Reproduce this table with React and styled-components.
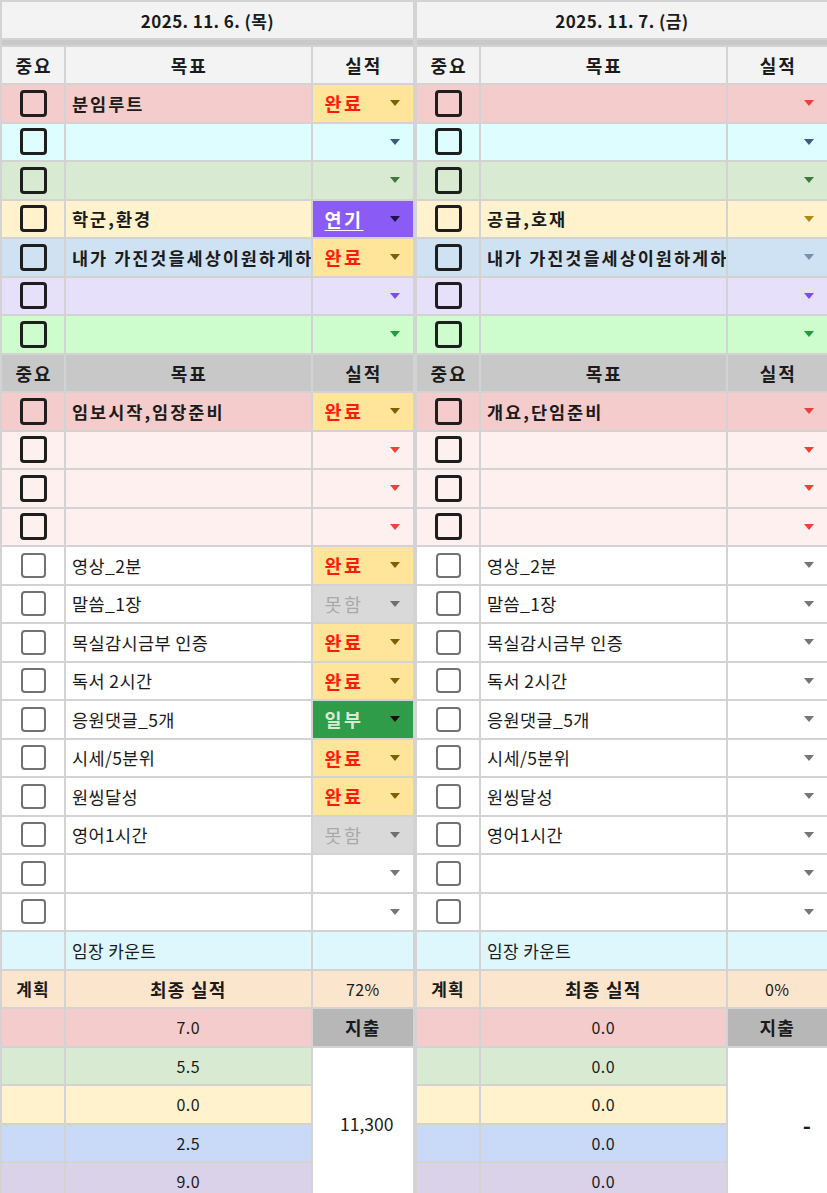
import React from 'react'
import styled, { createGlobalStyle } from 'styled-components'

const GlobalStyle = createGlobalStyle`
  html, body {
    margin: 0;
    padding: 0;
    overflow: hidden;
    background: #ffffff;
  }
  body {
    font-family: "Noto Sans CJK KR", "Noto Sans", sans-serif;
    color: #1b1b1b;
  }
`

const ROW = {
  pink: { bg: '#f4cccc', arrow: '#e8403c' },
  cyan: { bg: '#ddfdff', arrow: '#3d5a80' },
  green: { bg: '#d9ead3', arrow: '#3e7a3e' },
  yellow: { bg: '#fff2cc', arrow: '#b08a18' },
  blue: { bg: '#cfe2f3', arrow: '#7391b3' },
  lavender: { bg: '#e6e0fb', arrow: '#7a4cf0' },
  mint: { bg: '#cdfdcd', arrow: '#1f9d3a' },
  blush: { bg: '#fff0f0', arrow: '#f0403c' },
  white: { bg: '#ffffff', arrow: '#767676' }
}

const STATUS = {
  완료: { bg: '#ffe599', color: '#ff1a0a', arrow: '#7f6000' },
  연기: { bg: '#8a5cf5', color: '#ffffff', arrow: '#20124d', underline: true },
  못함: { bg: '#d9d9d9', color: '#a9a9a9', arrow: '#6f6f6f', light: true },
  일부: { bg: '#2e9c48', color: '#d9ead3', arrow: '#111111' }
}

const days = [
  {
    date: '2025. 11. 6. (목)',
    top: [
      ['pink', '분임루트', '완료'],
      ['cyan', '', ''],
      ['green', '', ''],
      ['yellow', '학군,환경', '연기'],
      ['blue', '내가 가진것을세상이원하게하', '완료'],
      ['lavender', '', ''],
      ['mint', '', '']
    ],
    mid: [
      ['pink', '임보시작,임장준비', '완료'],
      ['blush', '', ''],
      ['blush', '', ''],
      ['blush', '', '']
    ],
    daily: [
      ['영상_2분', '완료'],
      ['말씀_1장', '못함'],
      ['목실감시금부 인증', '완료'],
      ['독서 2시간', '완료'],
      ['응원댓글_5개', '일부'],
      ['시세/5분위', '완료'],
      ['원씽달성', '완료'],
      ['영어1시간', '못함'],
      ['', ''],
      ['', '']
    ],
    pct: '72%',
    totals: ['7.0', '5.5', '0.0', '2.5', '9.0'],
    spend: '11,300'
  },
  {
    date: '2025. 11. 7. (금)',
    top: [
      ['pink', '', ''],
      ['cyan', '', ''],
      ['green', '', ''],
      ['yellow', '공급,호재', ''],
      ['blue', '내가 가진것을세상이원하게하', ''],
      ['lavender', '', ''],
      ['mint', '', '']
    ],
    mid: [
      ['pink', '개요,단임준비', ''],
      ['blush', '', ''],
      ['blush', '', ''],
      ['blush', '', '']
    ],
    daily: [
      ['영상_2분', ''],
      ['말씀_1장', ''],
      ['목실감시금부 인증', ''],
      ['독서 2시간', ''],
      ['응원댓글_5개', ''],
      ['시세/5분위', ''],
      ['원씽달성', ''],
      ['영어1시간', ''],
      ['', ''],
      ['', '']
    ],
    pct: '0%',
    totals: ['0.0', '0.0', '0.0', '0.0', '0.0'],
    spend: '-'
  }
]

const totalColors = ['#f4cccc', '#d9ead3', '#fff2cc', '#c9daf8', '#d9d2e9']

const Sheet = styled.div`
  display: flex;
  width: 827px;
`

const DayTable = styled.div`
  display: grid;
  grid-template-columns: 62px 244.5px ${p => (p.$last ? '1fr' : '100.5px')};
  grid-template-rows: 36px 4.7px;
  grid-auto-rows: 36.5px;
  gap: 2px;
  padding: 2px 0 0 2px;
  background: #d3d3d3;
  flex: ${p => (p.$last ? '1' : '0 0 413px')};
`

const DateHead = styled.div`
  grid-column: 1 / -1;
  background: #f3f3f3;
  display: flex;
  align-items: center;
  justify-content: center;
  font-size: 17px;
  font-weight: 700;
  letter-spacing: 0.4px;
`

const Band = styled.div`
  grid-column: 1 / -1;
  background: #c9c9c9;
`

const HeadCell = styled.div`
  background: ${p => p.$bg};
  display: flex;
  align-items: center;
  justify-content: center;
  font-size: 18px;
  font-weight: 700;
  letter-spacing: 2px;
  text-indent: 2px;
`

const Cell = styled.div`
  background: ${p => p.$bg};
  display: flex;
  align-items: center;
  justify-content: ${p => (p.$center ? 'center' : 'flex-start')};
  min-width: 0;
  overflow: hidden;
`

const Goal = styled.span`
  padding-left: 6px;
  font-size: 17.5px;
  font-weight: ${p => (p.$bold ? 700 : 400)};
  white-space: nowrap;
  letter-spacing: ${p => (p.$bold ? '2px' : '0.4px')};
`

const Check = styled.span`
  width: 21px;
  height: 21px;
  box-sizing: content-box;
  border: ${p => (p.$strong ? '3px solid #1e1e1e' : '2.5px solid #727272')};
  border-radius: 4px;
  background: transparent;
`

const Result = styled.div`
  background: ${p => p.$bg};
  display: flex;
  align-items: center;
  justify-content: space-between;
  padding: 0 13px 0 12px;
`

const Status = styled.span`
  font-size: 18.5px;
  letter-spacing: 2.5px;
  color: ${p => p.$color};
  text-decoration: ${p => (p.$underline ? 'underline' : 'none')};
  text-underline-offset: 3px;
  font-weight: ${p => (p.$light ? 400 : 700)};
`

const Arrow = styled.span`
  margin-left: auto;
  width: 0;
  height: 0;
  border-left: 5.5px solid transparent;
  border-right: 5.5px solid transparent;
  border-top: 6px solid ${p => p.$color};
`

const Plain = styled.span`
  font-size: ${p => p.$size || 16}px;
  font-weight: ${p => (p.$bold ? 700 : 400)};
  padding-left: ${p => (p.$indent ? '6px' : '0')};
  letter-spacing: ${p => (p.$bold ? '1.2px' : '0.4px')};
  color: #1b1b1b;
`

const Spend = styled.div`
  grid-row: span 4;
  background: #ffffff;
  display: flex;
  align-items: center;
  justify-content: ${p => (p.$dash ? 'flex-end' : 'center')};
  padding: ${p => (p.$dash ? '0 16px 0 0' : '0 0 0 8px')};
  font-size: ${p => (p.$dash ? '22px' : '17.5px')};
  font-weight: ${p => (p.$dash ? 700 : 400)};
`

const Header = ({ bg }) => (
  <>
    <HeadCell $bg={bg}>중요</HeadCell>
    <HeadCell $bg={bg}>목표</HeadCell>
    <HeadCell $bg={bg}>실적</HeadCell>
  </>
)

const TaskRow = ({ tone, text, status, strong }) => {
  const row = ROW[tone]
  const st = STATUS[status]
  return (
    <>
      <Cell $bg={row.bg} $center>
        <Check $strong={strong} />
      </Cell>
      <Cell $bg={row.bg}>
        <Goal $bold={strong}>{text}</Goal>
      </Cell>
      <Result $bg={st ? st.bg : row.bg}>
        {st && (
          <Status $color={st.color} $underline={st.underline} $light={st.light}>
            {status}
          </Status>
        )}
        <Arrow $color={st ? st.arrow : row.arrow} />
      </Result>
    </>
  )
}

const Day = ({ day, last }) => (
  <DayTable $last={last}>
    <DateHead>{day.date}</DateHead>
    <Band />
    <Header bg="#f3f3f3" />
    {day.top.map(([tone, text, status], i) => (
      <TaskRow key={`t${i}`} tone={tone} text={text} status={status} strong />
    ))}
    <Header bg="#c8c8c8" />
    {day.mid.map(([tone, text, status], i) => (
      <TaskRow key={`m${i}`} tone={tone} text={text} status={status} strong />
    ))}
    {day.daily.map(([text, status], i) => (
      <TaskRow key={`d${i}`} tone="white" text={text} status={status} />
    ))}

    <Cell $bg="#ddf7fd" />
    <Cell $bg="#ddf7fd">
      <Plain $indent $size={17}>임장 카운트</Plain>
    </Cell>
    <Cell $bg="#ddf7fd" />

    <Cell $bg="#fce5cd" $center>
      <Plain $bold $size={17}>계획</Plain>
    </Cell>
    <Cell $bg="#fce5cd" $center>
      <Plain $bold $size={18}>최종 실적</Plain>
    </Cell>
    <Cell $bg="#fce5cd" $center>
      <Plain $size={16}>{day.pct}</Plain>
    </Cell>

    {day.totals.map((v, i) => (
      <React.Fragment key={`s${i}`}>
        <Cell $bg={totalColors[i]} />
        <Cell $bg={totalColors[i]} $center>
          <Plain $size={16}>{v}</Plain>
        </Cell>
        {i === 0 && (
          <Cell $bg="#b7b7b7" $center>
            <Plain $bold $size={18}>지출</Plain>
          </Cell>
        )}
        {i === 1 && <Spend $dash={day.spend === '-'}>{day.spend}</Spend>}
      </React.Fragment>
    ))}
  </DayTable>
)

export default function App() {
  return (
    <>
      <GlobalStyle />
      <Sheet>
        {days.map((d, i) => (
          <Day key={d.date} day={d} last={i === days.length - 1} />
        ))}
      </Sheet>
    </>
  )
}
